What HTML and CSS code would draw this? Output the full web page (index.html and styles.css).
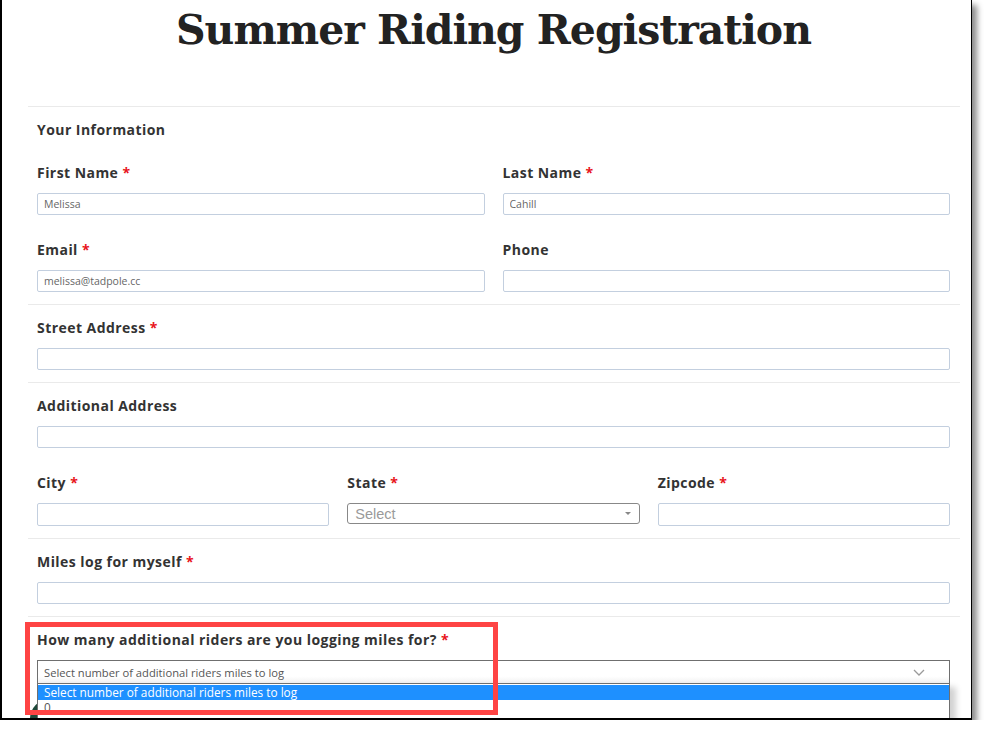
FILE: index.html
```html
<!DOCTYPE html>
<html lang="en">
<head>
    <meta charset="UTF-8">
    <title>Summer Riding Registration</title>
    <link rel="stylesheet" href="styles.css">
</head>
<body>
    <div class="frame">
        <h1 class="title">Summer Riding Registration</h1>
        <form class="form">
            <div class="section">
                <h2 class="section-title">Your Information</h2>
                <div class="row cols-2">
                    <div class="field">
                        <label>First Name <span class="req">*</span></label>
                        <input type="text" value="Melissa">
                    </div>
                    <div class="field">
                        <label>Last Name <span class="req">*</span></label>
                        <input type="text" value="Cahill">
                    </div>
                </div>
                <div class="row cols-2">
                    <div class="field">
                        <label>Email <span class="req">*</span></label>
                        <input type="text" value="melissa@tadpole.cc">
                    </div>
                    <div class="field">
                        <label>Phone</label>
                        <input type="text">
                    </div>
                </div>
            </div>

            <div class="section">
                <div class="field">
                    <label>Street Address <span class="req">*</span></label>
                    <input type="text">
                </div>
            </div>

            <div class="section">
                <div class="field">
                    <label>Additional Address</label>
                    <input type="text">
                </div>
                <div class="row cols-3">
                    <div class="field">
                        <label>City <span class="req">*</span></label>
                        <input type="text" class="tall">
                    </div>
                    <div class="field">
                        <label>State <span class="req">*</span></label>
                        <div class="state-select">
                            <span>Select</span>
                            <span class="caret"></span>
                        </div>
                    </div>
                    <div class="field">
                        <label>Zipcode <span class="req">*</span></label>
                        <input type="text" class="tall">
                    </div>
                </div>
            </div>

            <div class="section">
                <div class="field">
                    <label>Miles log for myself <span class="req">*</span></label>
                    <input type="text">
                </div>
            </div>

            <div class="section last">
                <div class="field">
                    <label>How many additional riders are you logging miles for? <span class="req">*</span></label>
                    <div class="riders">
                        <div class="riders-select">
                            <span>Select number of additional riders miles to log</span>
                            <svg class="chevron" width="12" height="7" viewBox="0 0 12 7">
                                <path d="M1 1 L6 6 L11 1" fill="none" stroke="#9a9a9a" stroke-width="1.3"/>
                            </svg>
                        </div>
                        <div class="chat-bubble"></div>
                        <ul class="riders-list">
                            <li class="selected">Select number of additional riders miles to log</li>
                            <li>0</li>
                        </ul>
                    </div>
                </div>
            </div>
        </form>
        <div class="highlight"></div>
    </div>
</body>
</html>
```

FILE: styles.css
```css
body {
    margin: 0;
    background-color: #ffffff;
    font-family: "Open Sans", Inter, sans-serif;
}

.frame {
    position: relative;
    box-sizing: border-box;
    width: 972px;
    height: 720px;
    border-left: 2px solid #000;
    border-right: 1px solid #000;
    border-bottom: 2px solid #000;
    background-color: #fff;
    box-shadow: 5px 5px 6px rgba(0, 0, 0, 0.45);
    overflow: hidden;
}

.title {
    margin: 0;
    height: 106px;
    padding: 2px 0 0 14px;
    box-sizing: border-box;
    text-align: center;
    font-family: "DejaVu Serif", "Liberation Serif", serif;
    font-weight: bold;
    font-size: 41px;
    line-height: 56px;
    color: #222;
    letter-spacing: -1px;
}

.form {
    margin: 0 11px 0 26px;
}

.section {
    border-top: 1px solid #eaeaea;
    padding: 14px 10px 12px 9px;
}

.section-title {
    margin: 0 0 26px 0;
    font-size: 14px;
    line-height: 17px;
    font-weight: 700;
    letter-spacing: 0.45px;
    color: #333;
}

.row {
    display: grid;
    gap: 18px;
}

.section > .row + .row,
.section > .field + .row {
    margin-top: 26px;
}

.cols-2 {
    grid-template-columns: 1fr 1fr;
}

.cols-3 {
    grid-template-columns: 1fr 1fr 1fr;
}

.field label {
    display: block;
    margin-bottom: 12px;
    font-size: 14px;
    line-height: 17px;
    font-weight: 700;
    letter-spacing: 0.45px;
    color: #333;
}

.req {
    color: #e8141b;
}

.field input {
    display: block;
    box-sizing: border-box;
    width: 100%;
    height: 22px;
    margin: 0;
    padding: 0 6px;
    border: 1px solid #c3cfdf;
    border-radius: 2px;
    font-family: "Open Sans", Inter, sans-serif;
    font-size: 10.5px;
    color: #666;
    outline: none;
}

.field input.tall {
    height: 23px;
}

.state-select {
    display: flex;
    justify-content: space-between;
    align-items: center;
    box-sizing: border-box;
    height: 21px;
    margin-top: 1px;
    padding: 0 8px 0 7px;
    border: 1px solid #888;
    border-radius: 3px;
    font-family: "Liberation Sans", Arial, sans-serif;
    font-size: 14.5px;
    color: #9a9a9a;
}

.caret {
    width: 0;
    height: 0;
    border-left: 3px solid transparent;
    border-right: 3px solid transparent;
    border-top: 3px solid #888;
}

.riders {
    position: relative;
}

.riders-select {
    display: flex;
    justify-content: space-between;
    align-items: center;
    box-sizing: border-box;
    height: 24px;
    padding: 0 24px 0 6px;
    border: 1px solid #6f6f6f;
    background: linear-gradient(#fff 70%, #f1f1f1);
    font-size: 11.2px;
    color: #555;
}

.chat-bubble {
    position: absolute;
    left: -7px;
    top: 39px;
    width: 40px;
    height: 40px;
    border-radius: 50%;
    background-color: #1f4a3b;
}

.riders-list {
    position: absolute;
    left: 0;
    right: 0;
    top: 23px;
    height: 40px;
    margin: 0;
    padding: 1px 0 0 0;
    list-style: none;
    border: 1px solid #6f6f6f;
    background-color: #fff;
    box-shadow: 6px 4px 6px rgba(0, 0, 0, 0.18);
    font-size: 11.8px;
    color: #555;
}

.riders-list li {
    height: 15px;
    line-height: 15px;
    padding-left: 6px;
}

.riders-list li.selected {
    background-color: #1e90ff;
    color: #fff;
}

.highlight {
    position: absolute;
    left: 23px;
    top: 622px;
    width: 473px;
    height: 93px;
    box-sizing: border-box;
    border: 5px solid #fe4444;
}
```
